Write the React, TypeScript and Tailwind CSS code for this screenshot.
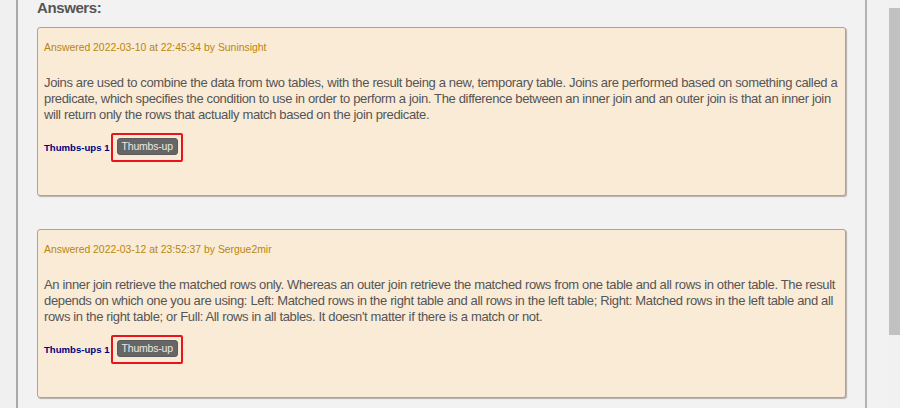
const answers = [
  {
    when: "2022-03-10 at 22:45:34",
    by: "Suninsight",
    text: "Joins are used to combine the data from two tables, with the result being a new, temporary table. Joins are performed based on something called a predicate, which specifies the condition to use in order to perform a join. The difference between an inner join and an outer join is that an inner join will return only the rows that actually match based on the join predicate.",
    ups: 1,
  },
  {
    when: "2022-03-12 at 23:52:37",
    by: "Sergue2mir",
    text: "An inner join retrieve the matched rows only. Whereas an outer join retrieve the matched rows from one table and all rows in other table. The result depends on which one you are using: Left: Matched rows in the right table and all rows in the left table; Right: Matched rows in the left table and all rows in the right table; or Full: All rows in all tables. It doesn't matter if there is a match or not.",
    ups: 1,
  },
];

function AnswerCard({ when, by, text, ups }: { when: string; by: string; text: string; ups: number }) {
  return (
    <div className="bg-[#faebd7] border border-[#a9a49c] rounded-[3px] shadow-[1px_1px_1px_#b5b0aa] px-[6px] pt-[14px] pb-[33px]">
      <p className="text-[10.4px] leading-[12px] text-[#b8860b]">
        Answered {when} by {by}
      </p>
      <p className="mt-[21px] text-[13px] tracking-[-0.35px] leading-[16px] text-[#555]">{text}</p>
      <div className="mt-[10px] flex items-center">
        <span className="text-[9.6px] leading-[12px] font-bold text-[#000080]">Thumbs-ups {ups}</span>
        <div className="ml-[1px] flex border-2 border-[#e8141a] rounded-[2px] pl-[4px] pr-[3px] pt-[3px] pb-[5px]">
          <button className="flex h-[17px] items-center px-[4px] bg-[#666] border border-[#5a5a5a] rounded-[3px] text-[10.5px] tracking-[-0.2px] leading-[15px] text-[#e8e8e8]">
            Thumbs-up
          </button>
        </div>
      </div>
    </div>
  );
}

export default function App() {
  return (
    <div className="h-[408px] w-[900px] overflow-hidden flex bg-[#f2f2f2] font-['Liberation_Sans',Arial,sans-serif]">
      <div className="w-[16px] shrink-0 bg-[#f0f0f0]" />
      <div className="w-[2px] shrink-0 bg-[#a9a9a9]" />
      <main className="w-[847px] shrink-0 px-[19px]">
        <h2 className="-mt-[1px] text-[15px] tracking-[-0.4px] leading-[17px] font-bold text-[#555] mb-[11px]">Answers:</h2>
        <div className="flex flex-col gap-[33px]">
          {answers.map((a) => (
            <AnswerCard key={a.when} {...a} />
          ))}
        </div>
      </main>
      <div className="w-[2px] shrink-0 bg-[#b3b3b3]" />
      <div className="w-[22px] shrink-0" />
      <div className="w-[11px] shrink-0 pt-[8px] bg-[#f1f1f1]">
        <div className="h-[327px] bg-[#c1c1c1]" />
      </div>
    </div>
  );
}
